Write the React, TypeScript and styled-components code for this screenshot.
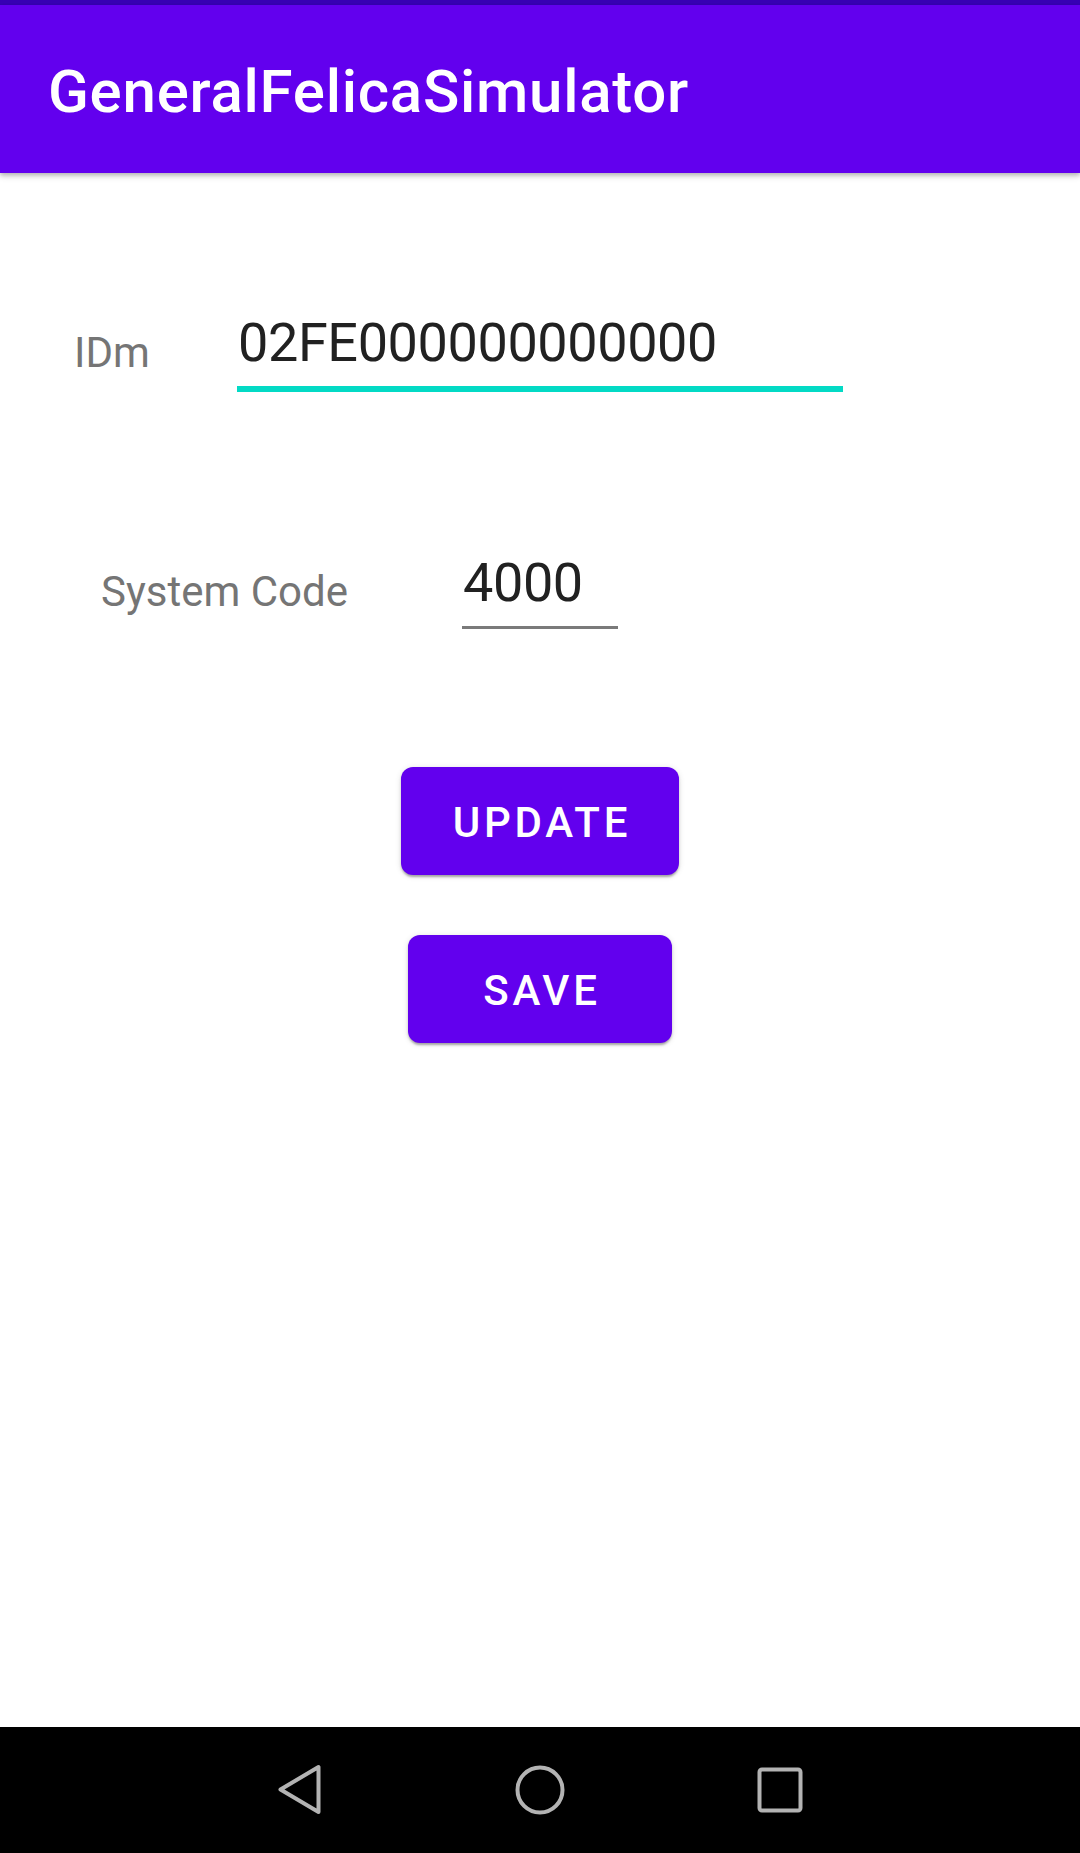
import React from "react";
import styled, { createGlobalStyle } from "styled-components";

const GlobalStyle = createGlobalStyle`
  html, body {
    margin: 0;
    padding: 0;
    background: #ffffff;
  }
  body {
    font-family: Roboto, "Noto Sans", "Liberation Sans", sans-serif;
    -webkit-font-smoothing: antialiased;
  }
  * { box-sizing: border-box; }
`;

const Screen = styled.div`
  width: 1080px;
  height: 1853px;
  display: flex;
  flex-direction: column;
  background: #ffffff;
  overflow: hidden;
`;

const StatusBar = styled.div`
  height: 5px;
  flex: none;
  background: #3700b3;
`;

const AppBar = styled.header`
  height: 168px;
  flex: none;
  display: flex;
  align-items: center;
  padding: 6px 48px 0 48px;
  background: #6200ee;
  box-shadow: 0 2px 4px rgba(0, 0, 0, 0.2), 0 4px 6px rgba(0, 0, 0, 0.12);
  position: relative;
  z-index: 1;
`;

const Title = styled.h1`
  margin: 0;
  font-size: 60px;
  line-height: 70px;
  font-weight: 500;
  letter-spacing: 0.75px;
  color: #ffffff;
`;

const Main = styled.main`
  flex: 1;
  display: flex;
  flex-direction: column;
  padding-top: 138px;
`;

const Row = styled.div<{ $indent: number; $labelWidth: number; $mt: number }>`
  display: flex;
  align-items: flex-start;
  padding-left: ${(p) => p.$indent}px;
  margin-top: ${(p) => p.$mt}px;

  & > label {
    width: ${(p) => p.$labelWidth}px;
  }
`;

const Label = styled.label<{ $offset: number }>`
  flex: none;
  margin-top: ${(p) => p.$offset}px;
  font-size: 42px;
  line-height: 50px;
  color: #757575;
  white-space: nowrap;
`;

const Field = styled.div<{ $width: number; $focused?: boolean }>`
  width: ${(p) => p.$width}px;
  font-size: 54px;
  line-height: 64px;
  letter-spacing: -0.4px;
  color: #212121;
  padding: 0 0 11px 1px;
  border-bottom: ${(p) => (p.$focused ? "6px solid #03dac5" : "3px solid #7a7a7a")};
  white-space: nowrap;
`;

const Buttons = styled.div`
  display: flex;
  flex-direction: column;
  align-items: center;
  gap: 60px;
  margin-top: 138px;
`;

const Button = styled.button`
  height: 108px;
  min-width: 264px;
  padding: 3px 48px 0 52px;
  border: none;
  border-radius: 12px;
  background: #6200ee;
  color: #ffffff;
  font-family: Roboto, "Noto Sans", "Liberation Sans", sans-serif;
  font-size: 42px;
  font-weight: 500;
  letter-spacing: 3.75px;
  text-transform: uppercase;
  box-shadow: 0 3px 2px -1px rgba(0, 0, 0, 0.2), 0 2px 3px rgba(0, 0, 0, 0.14),
    0 1px 6px rgba(0, 0, 0, 0.12);
`;

const NavBar = styled.nav`
  height: 126px;
  flex: none;
  background: #000000;
  display: flex;
  align-items: center;
  justify-content: center;
`;

const NavSlot = styled.div`
  width: 240px;
  display: flex;
  justify-content: center;
  align-items: center;
`;

const NavIcon = styled.svg`
  width: 60px;
  height: 60px;
  display: block;
`;

export default function App() {
  return (
    <>
      <GlobalStyle />
      <Screen>
        <StatusBar />
        <AppBar>
          <Title>GeneralFelicaSimulator</Title>
        </AppBar>
        <Main>
          <Row $indent={74} $labelWidth={163} $mt={0}>
            <Label $offset={17}>IDm</Label>
            <Field $width={606} $focused>
              02FE000000000000
            </Field>
          </Row>
          <Row $indent={101} $labelWidth={361} $mt={159}>
            <Label $offset={16}>System Code</Label>
            <Field $width={156}>4000</Field>
          </Row>
          <Buttons>
            <Button>Update</Button>
            <Button>Save</Button>
          </Buttons>
        </Main>
        <NavBar>
          <NavSlot>
            <NavIcon viewBox="0 0 60 60">
              <path
                d="M10.5 29.5 L48.5 7 L48.5 52 Z"
                fill="none"
                stroke="#b3b3b3"
                strokeWidth="4"
                strokeLinejoin="round"
              />
            </NavIcon>
          </NavSlot>
          <NavSlot>
            <NavIcon viewBox="0 0 60 60">
              <circle cx="30" cy="30" r="22.5" fill="none" stroke="#b3b3b3" strokeWidth="4" />
            </NavIcon>
          </NavSlot>
          <NavSlot>
            <NavIcon viewBox="0 0 60 60">
              <rect
                x="9.5"
                y="9.5"
                width="41"
                height="41"
                rx="2.5"
                fill="none"
                stroke="#b3b3b3"
                strokeWidth="4"
              />
            </NavIcon>
          </NavSlot>
        </NavBar>
      </Screen>
    </>
  );
}
